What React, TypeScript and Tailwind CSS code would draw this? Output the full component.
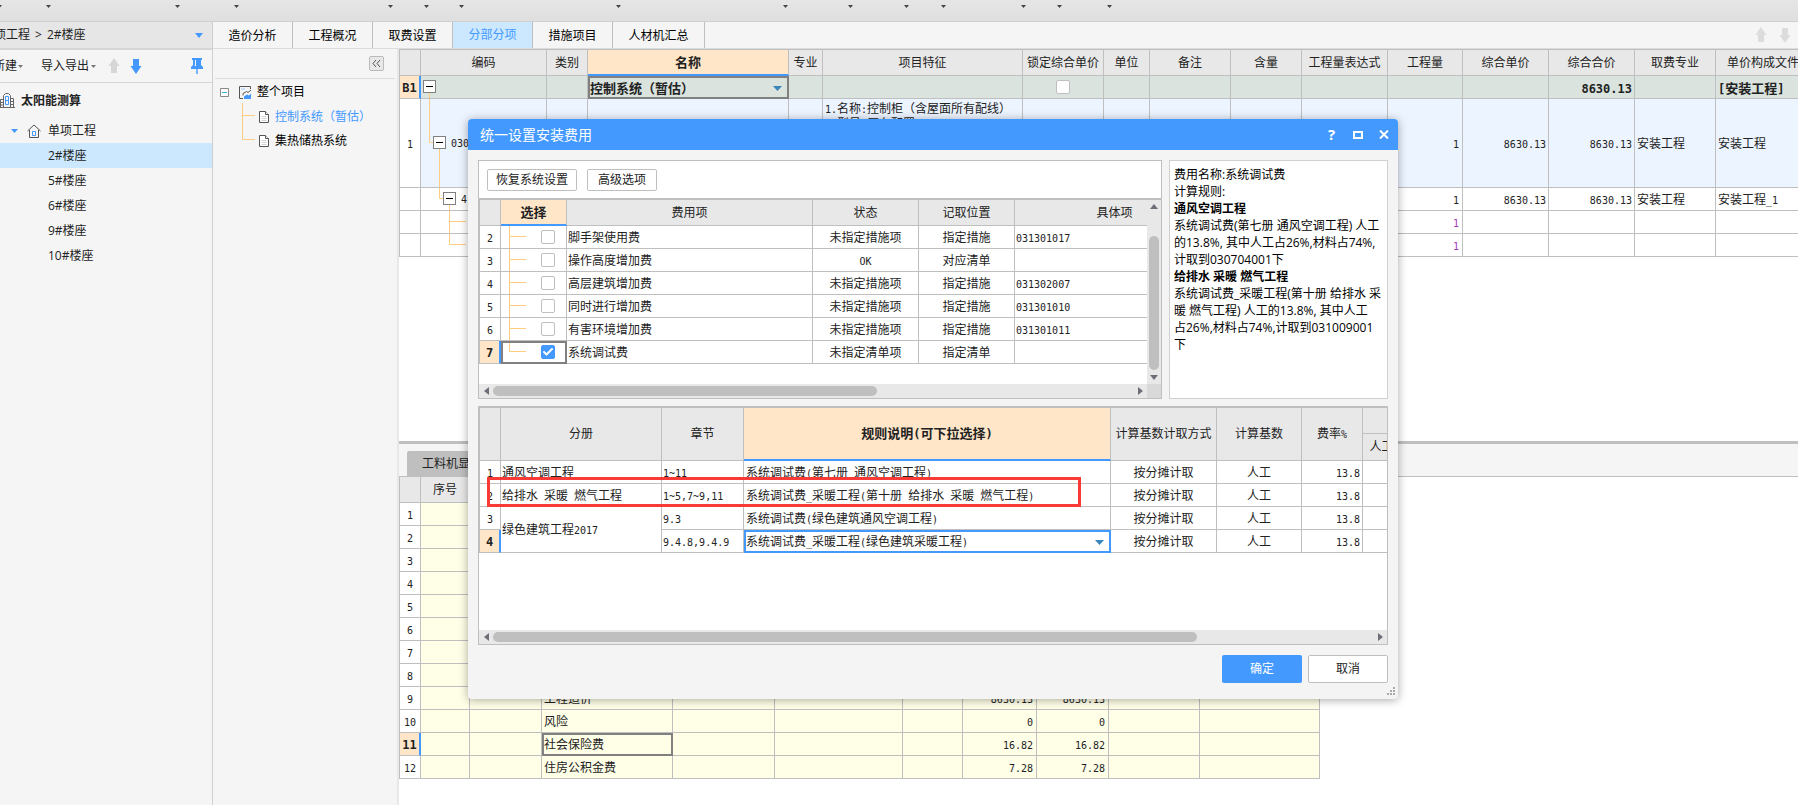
import { ReactNode } from "react";
import { Check } from "lucide-react";
import clsx from "clsx";

const MENU_WIDTHS = [
  "w-[2px]", "w-[49px]", "w-[129px]", "w-[59px]", "w-[154px]", "w-[36px]", "w-[35px]", "w-[157px]",
  "w-[167px]", "w-[65px]", "w-[56px]", "w-[37px]", "w-[80px]", "w-[36px]", "w-[50px]",
];

const TABS = ["造价分析", "工程概况", "取费设置", "分部分项", "措施项目", "人材机汇总"];
const BUILDINGS = ["2#楼座", "5#楼座", "6#楼座", "9#楼座", "10#楼座"];

const MAIN_COLS = [
  { title: "", w: 21 },
  { title: "编码", w: 126 },
  { title: "类别", w: 41 },
  { title: "名称", w: 201, active: true },
  { title: "专业", w: 34 },
  { title: "项目特征", w: 200 },
  { title: "锁定综合单价", w: 81 },
  { title: "单位", w: 46 },
  { title: "备注", w: 81 },
  { title: "含量", w: 71 },
  { title: "工程量表达式", w: 86 },
  { title: "工程量", w: 75 },
  { title: "综合单价", w: 86 },
  { title: "综合合价", w: 86 },
  { title: "取费专业", w: 81 },
  { title: "单价构成文件", w: 95 },
];

const COST_COLS = [21, 49, 72, 131, 102, 128, 60, 74, 72, 91, 120];
const COST_ROWS = [
  { name: "" }, { name: "" }, { name: "" }, { name: "" }, { name: "" }, { name: "" }, { name: "" }, { name: "" },
  { name: "工程造价", value: "8630.13" },
  { name: "风险", value: "0" },
  { name: "社会保险费", value: "16.82", active: true },
  { name: "住房公积金费", value: "7.28" },
];

const FEES = [
  { no: 2, name: "脚手架使用费", state: "未指定措施项", place: "指定措施", item: "031301017" },
  { no: 3, name: "操作高度增加费", state: "OK", place: "对应清单", item: "" },
  { no: 4, name: "高层建筑增加费", state: "未指定措施项", place: "指定措施", item: "031302007" },
  { no: 5, name: "同时进行增加费", state: "未指定措施项", place: "指定措施", item: "031301010" },
  { no: 6, name: "有害环境增加费", state: "未指定措施项", place: "指定措施", item: "031301011" },
  { no: 7, name: "系统调试费", state: "未指定清单项", place: "指定清单", item: "", checked: true },
];

const RULES = [
  { no: 1, book: "通风空调工程", chapter: "1~11", rule: "系统调试费(第七册 通风空调工程)" },
  { no: 2, book: "给排水 采暖 燃气工程", chapter: "1~5,7~9,11", rule: "系统调试费_采暖工程(第十册 给排水 采暖 燃气工程)" },
  { no: 3, book: "绿色建筑工程2017", chapter: "9.3", rule: "系统调试费(绿色建筑通风空调工程)", span: 2 },
  { no: 4, book: "", chapter: "9.4.8,9.4.9", rule: "系统调试费_采暖工程(绿色建筑采暖工程)", active: true },
];

/** Grid text: half-width characters take exactly half of a full-width one. */
function Txt({ children, bold }: { children: string; bold?: boolean }) {
  return (
    <span className={clsx("whitespace-pre", bold ? "text-[13px] font-bold" : "text-[12px]")}>
      {children.split(/([\x20-\x7e]+)/).map((part, i) =>
        i % 2 ? (
          <span key={i} className={clsx("font-['DejaVu_Sans_Mono',monospace]", bold ? "text-[12px]" : "text-[10px]")}>
            {part}
          </span>
        ) : (
          part
        ),
      )}
    </span>
  );
}

function Th({ children, active, ...rest }: { children?: ReactNode; active?: boolean; colSpan?: number; rowSpan?: number }) {
  return (
    <th
      {...rest}
      className={clsx(
        "overflow-hidden border-r border-[#bfbfbf] p-0 text-center font-normal whitespace-nowrap",
        active ? "border-b-2 border-b-[#4499ff] bg-[#ffe6c8]" : "border-b bg-[#e8e8e8]",
      )}
    >
      {children}
    </th>
  );
}

/** `flush` drops the top padding, for cells that hold a drawing or a tick box. */
function Td({ children, className, flush, ...rest }: { children?: ReactNode; className?: string; flush?: boolean; rowSpan?: number }) {
  return (
    <td
      {...rest}
      className={clsx(
        "overflow-hidden border-r border-b border-[#bfbfbf] pb-0 whitespace-nowrap",
        !flush && "pt-[2px]",
        className,
      )}
    >
      {children}
    </td>
  );
}

function IndexCell({ children, active }: { children?: string; active?: boolean }) {
  return (
    <Td flush={active} className={clsx("text-center", active ? "border-r-2 border-r-[#4499ff] bg-[#ffe6c8]" : "bg-white")}>
      {children && <Txt bold={active}>{children}</Txt>}
    </Td>
  );
}

function Cols({ widths }: { widths: number[] }) {
  return (
    <colgroup>
      {widths.map((w, i) => (
        <col key={i} style={{ width: w }} />
      ))}
    </colgroup>
  );
}

function Tri({ className, dir = "down", w = 7, h = 4 }: { className?: string; dir?: "up" | "down" | "left" | "right"; w?: number; h?: number }) {
  const d = {
    down: `M0 0H${w}L${w / 2} ${h}Z`,
    up: `M0 ${h}H${w}L${w / 2} 0Z`,
    left: `M${w} 0V${h}L0 ${h / 2}Z`,
    right: `M0 0V${h}L${w} ${h / 2}Z`,
  }[dir];
  return (
    <svg width={w} height={h} className={clsx("shrink-0", className)} fill="currentColor" aria-hidden>
      <path d={d} />
    </svg>
  );
}

function Arrow({ up, className }: { up?: boolean; className?: string }) {
  return (
    <svg width="12" height="16" viewBox="0 0 12 16" fill="currentColor" className={className} aria-hidden>
      <path d={up ? "M6 0L11.500 8H9V15H3V8H.5Z" : "M3 1H9V8H11.500L6 16L.5 8H3Z"} />
    </svg>
  );
}

function CheckBox({ label, checked }: { label: string; checked?: boolean }) {
  return (
    <label className="grid size-[14px] place-items-center">
      <input
        type="checkbox"
        aria-label={label}
        defaultChecked={checked}
        className="peer col-start-1 row-start-1 size-[14px] appearance-none rounded-[2px] border border-[#bfbfbf] bg-white checked:border-[#4499ff] checked:bg-[#4499ff]"
      />
      <Check size={12} strokeWidth={4} className="pointer-events-none col-start-1 row-start-1 text-white opacity-0 peer-checked:opacity-100" />
    </label>
  );
}

function HScroll({ thumb, className }: { thumb: string; className?: string }) {
  return (
    <div className={clsx("flex h-[14px] shrink-0 items-center bg-[#e8e8e8] pr-1 pl-[5px] text-[#6e6e78]", className)}>
      <Tri dir="left" w={5} h={8} />
      <div className={clsx("ml-1 h-[10px] rounded-full bg-[#bfbfbf]", thumb)} />
      <Tri dir="right" w={5} h={8} className="ml-auto" />
    </div>
  );
}

function Sidebar() {
  return (
    <aside className="w-[213px] shrink-0 overflow-hidden border-r border-[#cfcfcf] bg-[#f5f5f5] text-[12px] text-[#222]">
      <div className="flex h-[28px] items-center justify-between border-b-2 border-[#d6d6d6] bg-[#e6e6e6] pr-[9px]">
        <div className="-ml-[18px] flex gap-[5px]">
          <span>单项工程</span>
          <span>&gt;</span>
          <span>2#楼座</span>
        </div>
        <Tri w={8} h={5} className="text-[#4499ff]" />
      </div>
      <div className="flex h-[33px] items-center border-b border-[#d6d6d6]">
        <button className="-ml-[7px] flex items-center gap-px">
          新建 <Tri w={5} h={3} className="text-[#777]" />
        </button>
        <button className="ml-[18px] flex items-center gap-[2px]">
          导入导出 <Tri w={5} h={3} className="text-[#777]" />
        </button>
        <Arrow up className="ml-3 text-[#d6d6d6]" />
        <Arrow className="ml-[10px] text-[#4499ff]" />
        <svg width="12" height="16" viewBox="0 0 12 16" className="ml-auto mr-[9px]" aria-hidden>
          <path d="M1 0H11V2H10V7L12 9V11H0V9L2 7V2H1ZM4 2V7L3.500 8H5V2ZM5.300 11H6.700V16H5.300Z" fill="#4499ff" fillRule="evenodd" />
        </svg>
      </div>
      <div className="flex h-[35px] items-center gap-[6px] font-bold">
        <svg width="15" height="15" viewBox="0 0 15 15" fill="none" stroke="#666" aria-hidden>
          <path d="M0 14.500H15M3.500 14V2.500L5.500 .5H8.500L10.500 2.500V14M3.500 6.500H.5V14M10.500 5.500H13.500V14M.5 9.500H3M.5 12H3M11 8.500H13.500M11 11.500H13.500" />
          <path d="M5.500 3.500H8.500V11.500H5.500ZM5.500 7.500H8.500" stroke="#4499ff" />
        </svg>
        太阳能测算
      </div>
      <div className="flex h-[25px] items-center pl-[11px]">
        <Tri w={7} h={4} className="text-[#4499ff]" />
        <svg width="14" height="14" viewBox="0 0 14 14" fill="none" stroke="#555" className="ml-[9px] mr-[7px]" aria-hidden>
          <path d="M.5 7L7 1L13.500 7M2.500 6V13.500H11.500V6" />
          <path d="M5.500 7.500H8.500V11.500H5.500Z" stroke="#4499ff" />
        </svg>
        单项工程
      </div>
      <ul>
        {BUILDINGS.map((b, i) => (
          <li key={b} className={clsx("flex h-[25px] items-center pl-12", i === 0 && "bg-[#cce8ff]")}>
            {b}
          </li>
        ))}
      </ul>
    </aside>
  );
}

function DocIcon() {
  return (
    <svg width="10" height="12" viewBox="0 0 10 12" fill="#fff" stroke="#555" aria-hidden>
      <path d="M.5 .5H6.500L9.500 3.500V11.500H.5Z" />
      <path d="M6.500 .5V3.500H9.500" />
      <path d="M2.500 5.500H7.500M2.500 7.500H7.500M2.500 9.500H7.500" stroke="#d4d4d4" />
    </svg>
  );
}

function ProjectTree() {
  return (
    <nav className="w-[186px] shrink-0 border-r-2 border-[#e8e8e8] bg-[#f5f5f5] px-[2px] text-[12px] text-black">
      <div className="flex h-[30px] items-center justify-end border-b border-[#dcdcdc] pr-[11px]">
        <button aria-label="收起" className="grid size-[15px] place-items-center rounded-[2px] border border-[#bbb] bg-[#e8e8e8]">
          <svg width="9" height="7" viewBox="0 0 9 7" fill="none" stroke="#555" aria-hidden>
            <path d="M4 0L1 3.500L4 7M8 0L5 3.500L8 7" />
          </svg>
        </button>
      </div>
      <div className="flex h-[26px] items-center pl-[5px]">
        <svg width="9" height="9" viewBox="0 0 9 9" fill="#fff" stroke="#888" aria-hidden>
          <path d="M.5 .5H8.500V8.500H.5Z" />
          <path d="M2 4.500H7" stroke="#3ab0d8" />
        </svg>
        <svg width="13" height="13" viewBox="0 0 13 13" fill="none" stroke="#555" className="ml-[10px] mr-[5px]" aria-hidden>
          <path d="M11.500 3V.5H.5V12.500H4M4 9.500V7.500L7.500 5.500L9 6.500L12 4" />
          <path d="M2 3H6" stroke="#9fcbff" />
          <path d="M5 13V10.500L8 8.500L10 9.500L12 7.500V13Z" fill="#4499ff" stroke="none" />
        </svg>
        整个项目
      </div>
      <div className="flex pl-[26px]">
        <svg width="15" height="48" viewBox="0 0 15 48" fill="none" stroke="#ffcc80" className="mt-[-2px]" aria-hidden>
          <path d="M1.500 0V36.500H14M1.500 12.500H14" />
        </svg>
        <ul>
          <li className="flex h-[24px] items-center gap-[6px] pl-[3px] text-[#4499ff]">
            <DocIcon />
            控制系统（暂估）
          </li>
          <li className="flex h-[24px] items-center gap-[6px] pl-[3px]">
            <DocIcon />
            集热储热系统
          </li>
        </ul>
      </div>
    </nav>
  );
}

/** Code column: tree lines, expander and code text of one row. */
function CodeCell({ lines, x, y, height, code }: { lines: string; x?: number; y: number; height: number; code?: string }) {
  return (
    <Td flush>
      <div className="flex items-center gap-[5px]">
        <svg width={x === undefined ? 48 : x + 13} height={height} fill="none" className="shrink-0 overflow-visible" aria-hidden>
          <path d={lines} stroke="#ffcc80" />
          {x !== undefined && (
            <>
              <rect x={x + 0.5} y={y + 0.5} width="12" height="12" fill="#fff" stroke="#808080" />
              <path d={`M${x + 3} ${y + 6.5}h7`} stroke="#000" />
            </>
          )}
        </svg>
        {code && <Txt>{code}</Txt>}
      </div>
    </Td>
  );
}

function MainGrid() {
  return (
    <table className="w-[1412px] table-fixed border-separate border-spacing-0 border-t border-l border-[#bfbfbf] text-[12px] leading-[14px] text-[#222]">
      <Cols widths={MAIN_COLS.map((c) => c.w)} />
      <thead>
        <tr className="h-[26px]">
          {MAIN_COLS.map((c) => (
            <Th key={c.title} active={c.active}>
              <Txt bold={c.active}>{c.title}</Txt>
            </Th>
          ))}
        </tr>
      </thead>
      <tbody>
        <tr className="h-[23px] bg-[#dae3de]">
          <IndexCell active>B1</IndexCell>
          <CodeCell lines="M8.500 17V22" x={2} y={4} height={22} />
          <Td />
          <Td className="pl-[2px] outline-2 -outline-offset-2 outline-[#808080]">
            <div className="flex items-center justify-between pr-[6px]">
              <Txt bold>控制系统（暂估）</Txt>
              <Tri w={9} h={5} className="text-[#3a86b8]" />
            </div>
          </Td>
          <Td />
          <Td />
          <Td flush>
            <div className="flex justify-center">
              <CheckBox label="锁定综合单价" />
            </div>
          </Td>
          {[0, 1, 2, 3, 4, 5].map((i) => (
            <Td key={i} />
          ))}
          <Td className="pr-[2px] text-right"><Txt bold>8630.13</Txt></Td>
          <Td />
          <Td className="pl-[2px]"><Txt bold>[安装工程]</Txt></Td>
        </tr>
        <tr className="h-[89px] bg-[#ecf4ff]">
          <IndexCell>1</IndexCell>
          <CodeCell lines="M8.500 -1V43.500H12M18.500 50V88" x={12} y={37} height={88} code="030" />
          <Td />
          <Td />
          <Td />
          <Td flush className="pt-[3px] pl-[2px] align-top">
            <Txt>1.名称:控制柜（含屋面所有配线）</Txt>
            <br />
            <Txt>{"  型号:原有配置"}</Txt>
          </Td>
          {[0, 1, 2, 3, 4].map((i) => (
            <Td key={i} />
          ))}
          <Td className="pr-[3px] text-right"><Txt>1</Txt></Td>
          <Td className="pr-[2px] text-right"><Txt>8630.13</Txt></Td>
          <Td className="pr-[2px] text-right"><Txt>8630.13</Txt></Td>
          <Td className="pl-[2px]"><Txt>安装工程</Txt></Td>
          <Td className="pl-[2px]"><Txt>安装工程</Txt></Td>
        </tr>
        <tr className="h-[23px]">
          <IndexCell />
          <CodeCell lines="M18.500 -1V10.500H22M28.500 17V22" x={22} y={4} height={22} code="4-" />
          {[0, 1, 2, 3, 4, 5, 6, 7, 8].map((i) => (
            <Td key={i} />
          ))}
          <Td className="pr-[3px] text-right"><Txt>1</Txt></Td>
          <Td className="pr-[2px] text-right"><Txt>8630.13</Txt></Td>
          <Td className="pr-[2px] text-right"><Txt>8630.13</Txt></Td>
          <Td className="pl-[2px]"><Txt>安装工程</Txt></Td>
          <Td className="pl-[2px]"><Txt>安装工程_1</Txt></Td>
        </tr>
        {["M28.500 -1V22M28.500 10.500H45", "M28.500 -1V10.500H45"].map((lines) => (
          <tr key={lines} className="h-[23px]">
            <IndexCell />
            <CodeCell lines={lines} y={0} height={22} />
            {[0, 1, 2, 3, 4, 5, 6, 7, 8].map((i) => (
              <Td key={i} />
            ))}
            <Td className="pr-[3px] text-right text-[#a040b8]"><Txt>1</Txt></Td>
            <Td />
            <Td />
            <Td />
            <Td />
          </tr>
        ))}
      </tbody>
    </table>
  );
}

function CostGrid() {
  return (
    <table className="w-[921px] table-fixed border-separate border-spacing-0 border-l border-[#bfbfbf] text-[12px] leading-[14px] text-[#222]">
      <Cols widths={COST_COLS} />
      <thead>
        <tr className="h-[26px]">
          {COST_COLS.map((w, i) => (
            <Th key={i}>{i === 1 && <Txt>序号</Txt>}</Th>
          ))}
        </tr>
      </thead>
      <tbody>
        {COST_ROWS.map((r, n) => (
          <tr key={n} className="h-[23px] bg-[#ffffe8]">
            <IndexCell active={r.active}>{String(n + 1)}</IndexCell>
            <Td />
            <Td />
            <Td className={clsx("pl-[2px]", r.active && "outline-2 -outline-offset-2 outline-[#808080]")}>
              <Txt>{r.name}</Txt>
            </Td>
            <Td />
            <Td />
            <Td />
            <Td className="pr-[3px] text-right"><Txt>{r.value ?? ""}</Txt></Td>
            <Td className="pr-[3px] text-right"><Txt>{r.value ?? ""}</Txt></Td>
            <Td />
            <Td />
          </tr>
        ))}
      </tbody>
    </table>
  );
}

function FeePanel() {
  return (
    <section className="flex h-[239px] min-w-0 flex-1 flex-col border border-[#bfbfbf] bg-white">
      <div className="flex h-[37px] shrink-0 items-center gap-[10px] px-2 text-[12px] text-[#222]">
        <button className="h-[22px] w-[90px] rounded-[2px] border border-[#bfbfbf] bg-white leading-none">恢复系统设置</button>
        <button className="h-[22px] w-[70px] rounded-[2px] border border-[#bfbfbf] bg-white leading-none">高级选项</button>
      </div>
      <div className="flex min-h-0 flex-1 border-t-2 border-[#bfbfbf]">
        <div className="flex min-w-0 flex-1 flex-col">
          <div className="min-h-0 flex-1 overflow-hidden">
            <table className="w-[736px] table-fixed border-separate border-spacing-0 border-l border-[#bfbfbf] text-[12px] leading-[14px] text-[#222]">
              <Cols widths={[21, 66, 246, 106, 96, 200]} />
              <thead>
                <tr className="h-[26px]">
                  <Th />
                  <Th active><Txt bold>选择</Txt></Th>
                  <Th><Txt>费用项</Txt></Th>
                  <Th><Txt>状态</Txt></Th>
                  <Th><Txt>记取位置</Txt></Th>
                  <Th><Txt>具体项</Txt></Th>
                </tr>
              </thead>
              <tbody>
                {FEES.map((f) => (
                  <tr key={f.no} className="h-[23px]">
                    <IndexCell active={f.checked}>{String(f.no)}</IndexCell>
                    <Td flush className={clsx(f.checked && "outline-2 -outline-offset-2 outline-[#808080]")}>
                      <div className="flex items-center gap-[15px]">
                        <svg width="25" height="22" fill="none" stroke="#ffcc80" className="overflow-visible" aria-hidden>
                          <path d={f.checked ? "M8.500 0V10.500H25" : "M8.500 0V23M8.500 10.500H25"} />
                        </svg>
                        <CheckBox label={f.name} checked={f.checked} />
                      </div>
                    </Td>
                    <Td className="pl-px"><Txt>{f.name}</Txt></Td>
                    <Td className="text-center"><Txt>{f.state}</Txt></Td>
                    <Td className="text-center"><Txt>{f.place}</Txt></Td>
                    <Td className="pl-px"><Txt>{f.item}</Txt></Td>
                  </tr>
                ))}
              </tbody>
            </table>
          </div>
          <HScroll thumb="w-[384px]" />
        </div>
        <div className="flex w-[14px] shrink-0 flex-col items-center bg-[#e8e8e8] text-[#6e6e78]">
          <Tri dir="up" w={8} h={5} className="mt-1" />
          <div className="mt-[27px] h-[134px] w-[10px] rounded-full bg-[#bfbfbf]" />
          <Tri w={8} h={5} className="mt-[5px]" />
          <div className="mt-auto h-[14px] w-full bg-[#d9d9d9]" />
        </div>
      </div>
    </section>
  );
}

function RuleInfo() {
  return (
    <section className="h-[239px] w-[219px] shrink-0 overflow-hidden border border-[#d0d0d0] bg-white px-1 pt-[5px] text-[12px] leading-[17px] whitespace-nowrap text-black">
      <p>费用名称:系统调试费</p>
      <p>计算规则:</p>
      <p className="font-bold">通风空调工程</p>
      <p>
        系统调试费(第七册 通风空调工程) 人工
        <br />
        的13.8%, 其中人工占26%,材料占74%,
        <br />
        计取到030704001下
      </p>
      <p className="font-bold">给排水 采暖 燃气工程</p>
      <p>
        系统调试费_采暖工程(第十册 给排水 采
        <br />
        暖 燃气工程) 人工的13.8%, 其中人工
        <br />
        占26%,材料占74%,计取到031009001
        <br />下
      </p>
    </section>
  );
}

function RulePanel() {
  return (
    <section className="relative flex h-[239px] flex-col border border-t-2 border-[#bfbfbf] bg-white">
      <div className="min-h-0 flex-1 overflow-hidden">
        <table className="w-[1004px] table-fixed border-separate border-spacing-0 border-l border-[#bfbfbf] text-[12px] leading-[14px] text-[#222]">
          <Cols widths={[21, 161, 82, 367, 106, 85, 61, 38, 82]} />
          <thead>
            <tr className="h-[26px]">
              <Th rowSpan={2} />
              <Th rowSpan={2}><Txt>分册</Txt></Th>
              <Th rowSpan={2}><Txt>章节</Txt></Th>
              <Th rowSpan={2} active><Txt bold>规则说明(可下拉选择)</Txt></Th>
              <Th rowSpan={2}><Txt>计算基数计取方式</Txt></Th>
              <Th rowSpan={2}><Txt>计算基数</Txt></Th>
              <Th rowSpan={2}><Txt>费率%</Txt></Th>
              <Th colSpan={2} />
            </tr>
            <tr className="h-[27px]">
              <Th><Txt>人工</Txt></Th>
              <Th />
            </tr>
          </thead>
          <tbody>
            {RULES.map((r) => (
              <tr key={r.no} className="h-[23px]">
                <IndexCell active={r.active}>{String(r.no)}</IndexCell>
                {r.book && (
                  <Td rowSpan={r.span} className="pl-px"><Txt>{r.book}</Txt></Td>
                )}
                <Td className="pl-px"><Txt>{r.chapter}</Txt></Td>
                <Td className={clsx("pl-[2px]", r.active && "outline-2 -outline-offset-2 outline-[#4499ff]")}>
                  <div className="flex items-center justify-between pr-[6px]">
                    <Txt>{r.rule}</Txt>
                    {r.active && <Tri w={9} h={5} className="text-[#3a86b8]" />}
                  </div>
                </Td>
                <Td className="text-center"><Txt>按分摊计取</Txt></Td>
                <Td className="text-center"><Txt>人工</Txt></Td>
                <Td className="pr-[2px] text-right"><Txt>13.8</Txt></Td>
                <Td />
                <Td />
              </tr>
            ))}
          </tbody>
        </table>
      </div>
      <HScroll thumb="w-[704px]" />
      {/* highlight frame drawn over row 2 */}
      <div className="pointer-events-none absolute top-[69px] left-2 h-[30px] w-[594px] border-[3px] border-[#fa3a37]" />
    </section>
  );
}

function FeeDialog() {
  return (
    <div
      role="dialog"
      aria-label="统一设置安装费用"
      className="absolute top-[119px] left-[468px] w-[930px] overflow-hidden rounded-[4px] bg-[#f4f4f4] shadow-[0_1px_10px_rgba(0,0,0,0.35)]"
    >
      <header className="flex h-[31px] items-center bg-[#4499ff] pr-[9px] pl-3 text-[14px] text-white">
        <h1 className="flex-1">统一设置安装费用</h1>
        <button aria-label="帮助" className="w-[9px] text-[15px] leading-none font-bold">?</button>
        <button aria-label="最大化" className="ml-[17px] h-[8px] w-[10px] border-2 border-white" />
        <button aria-label="关闭" className="ml-4">
          <svg width="10" height="9" viewBox="0 0 10 9" fill="none" stroke="#fff" strokeWidth="2" aria-hidden>
            <path d="M1 .5L9 8.500M9 .5L1 8.500" />
          </svg>
        </button>
      </header>
      <div className="flex flex-col gap-[7px] px-[10px] pt-[10px]">
        <div className="flex gap-[7px]">
          <FeePanel />
          <RuleInfo />
        </div>
        <RulePanel />
      </div>
      <footer className="flex h-[54px] items-start justify-end gap-[6px] pt-[10px] pr-[3px] text-[12px]">
        <button className="h-[28px] w-[80px] rounded-[2px] bg-[#4499ff] text-white">确定</button>
        <button className="h-[28px] w-[80px] rounded-[2px] border border-[#bfbfbf] bg-white text-[#222]">取消</button>
        <svg width="8" height="8" viewBox="0 0 8 8" fill="#aaa" className="mb-1 ml-[-7px] self-end" aria-hidden>
          <path d="M6 0h2v2h-2zM3 3h2v2h-2zM6 3h2v2h-2zM0 6h2v2h-2zM3 6h2v2h-2zM6 6h2v2h-2z" />
        </svg>
      </footer>
    </div>
  );
}

export default function App() {
  return (
    <div className="relative flex h-screen flex-col overflow-hidden bg-white font-['Open_Sans','Noto_Sans_CJK_SC',sans-serif]">
      <div className="flex h-[22px] shrink-0 border-b border-[#cfcfcf] bg-linear-to-b from-[#e6e6e6] to-[#dfdfdf]">
        {MENU_WIDTHS.map((w, i) => (
          <button key={i} aria-label="菜单" className={clsx("flex shrink-0 justify-end pt-[5px] text-[#444]", w)}>
            <Tri w={5} h={3} />
          </button>
        ))}
      </div>
      <div className="flex min-h-0 flex-1">
        <Sidebar />
        <div className="flex min-w-0 flex-1 flex-col">
          <div className="flex h-[27px] shrink-0 items-center border-b border-[#dcdcdc] bg-[#f5f5f5] pr-[7px] text-[12px] text-black">
            {TABS.map((t) => (
              <button
                key={t}
                className={clsx(
                  "h-full border-r border-[#bfbfbf]",
                  t === "分部分项" ? "bg-[#cce8ff] text-[#4499ff]" : "bg-[#f5f5f5] pt-[2px]",
                  t.length > 4 ? "w-[92px]" : "w-[80px]",
                )}
              >
                {t}
              </button>
            ))}
            <Arrow up className="mr-3 ml-auto text-[#dcdcdc]" />
            <Arrow className="text-[#dcdcdc]" />
          </div>
          <div className="flex min-h-0 flex-1">
            <ProjectTree />
            <main className="flex min-w-0 flex-1 flex-col overflow-hidden">
              <div className="h-[392px] shrink-0 overflow-hidden">
                <MainGrid />
              </div>
              <div className="h-[3px] shrink-0 bg-[#bfbfbf]" />
              <div className="flex h-[33px] shrink-0 items-end border-b border-[#bfbfbf] bg-[#f5f5f5] pl-2">
                <button className="h-[25px] rounded-t-[2px] bg-[#bfbfbf] px-[15px] text-[12px] text-[#222]">工料机显示</button>
              </div>
              <div className="min-h-0 flex-1">
                <CostGrid />
              </div>
            </main>
          </div>
        </div>
      </div>
      <FeeDialog />
    </div>
  );
}
